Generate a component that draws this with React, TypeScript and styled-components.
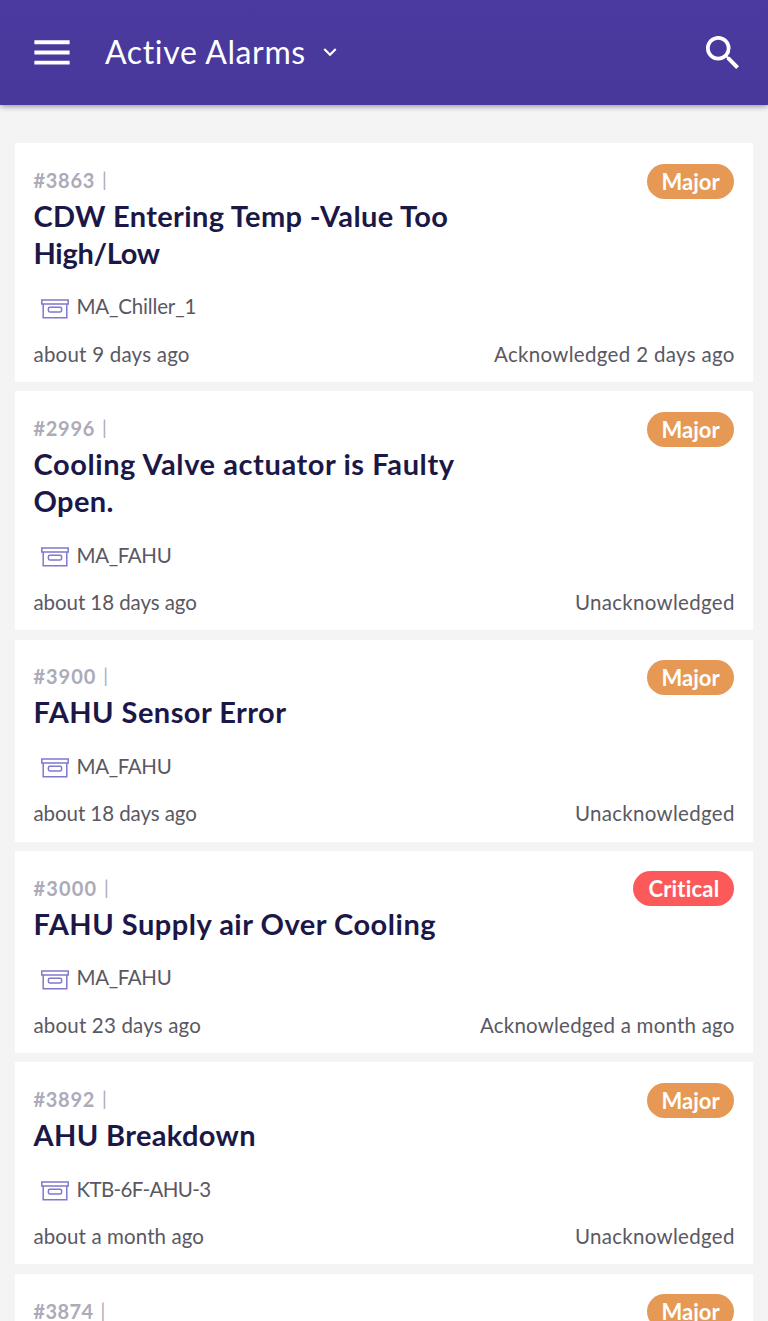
import React from "react";
import styled, { createGlobalStyle } from "styled-components";

type Severity = "Major" | "Critical";

/* A piece of text with its letter spacing in px. */
type Tracked = [text: string, tracking: number];

interface AlarmDetails {
  title: Tracked[];
  asset: Tracked;
  raised: Tracked;
  status: Tracked;
}

interface Alarm {
  id: Tracked;
  severity: Severity;
  details?: AlarmDetails;
}

const UNACKNOWLEDGED: Tracked = ["Unacknowledged", 0.3];
const FAHU: Tracked = ["MA_FAHU", -0.35];

const alarms: Alarm[] = [
  {
    id: ["#3863", 0.7],
    severity: "Major",
    details: {
      title: [["CDW Entering Temp -Value Too", 0.35], ["High/Low", -0.3]],
      asset: ["MA_Chiller_1", -0.17],
      raised: ["about 9 days ago", 0.22],
      status: ["Acknowledged 2 days ago", 0.32],
    },
  },
  {
    id: ["#2996", 0.7],
    severity: "Major",
    details: {
      title: [["Cooling Valve actuator is Faulty", 0.58], ["Open.", 0.4]],
      asset: FAHU,
      raised: ["about 18 days ago", -0.08],
      status: UNACKNOWLEDGED,
    },
  },
  {
    id: ["#3900", 0.95],
    severity: "Major",
    details: {
      title: [["FAHU Sensor Error", 0.46]],
      asset: FAHU,
      raised: ["about 18 days ago", -0.08],
      status: UNACKNOWLEDGED,
    },
  },
  {
    id: ["#3000", 1.12],
    severity: "Critical",
    details: {
      title: [["FAHU Supply air Over Cooling", 0.51]],
      asset: FAHU,
      raised: ["about 23 days ago", 0.17],
      status: ["Acknowledged a month ago", 0.21],
    },
  },
  {
    id: ["#3892", 0.7],
    severity: "Major",
    details: {
      title: [["AHU Breakdown", 0.35]],
      asset: ["KTB-6F-AHU-3", -0.63],
      raised: ["about a month ago", 0.1],
      status: UNACKNOWLEDGED,
    },
  },
  { id: ["#3874", 0.4], severity: "Major" },
];

const GlobalStyle = createGlobalStyle`
  * { box-sizing: border-box; }
  html, body { margin: 0; background: #f4f4f4; }
  body {
    font-family: Lato, "Open Sans", sans-serif;
    font-variant-ligatures: none;
  }
  button { border: 0; padding: 0; background: none; color: inherit; font: inherit; }
  svg { display: block; }
`;

const Screen = styled.div`
  display: flex;
  flex-direction: column;
  height: 1321px;
  overflow: hidden;
`;

const AppBar = styled.header`
  flex: none;
  display: flex;
  align-items: center;
  height: 105px;
  padding: 0 29px 0 34px;
  color: #fff;
  background: linear-gradient(#4b3a9f, #48389b);
  box-shadow: 0 1px 6px rgba(0, 0, 0, 0.45);
`;

const MenuButton = styled.button`
  margin-right: 35px;
`;

const ViewPicker = styled.button`
  display: flex;
  align-items: center;
  flex: 1;
`;

const ViewName = styled.span`
  margin-top: -1px;
  font-size: 32px;
  line-height: 40px;
  letter-spacing: 0.63px;
`;

const Chevron = styled.svg`
  margin: -1px 0 0 11.2px;
`;

const List = styled.main`
  display: flex;
  flex-direction: column;
  gap: 9.3px;
  padding: 38px 15px 0;
`;

const Card = styled.article`
  flex: none;
  padding: 20.6px 18.6px 14.2px 18.5px;
  background: #fff;
  color: #5a5863;
  font-size: 20.5px;
`;

const CardHead = styled.div`
  display: flex;
  justify-content: space-between;
  align-items: flex-start;
`;

const Heading = styled.div`
  padding-top: 4.3px;
`;

const AlarmId = styled.div<{ $tracking: number }>`
  display: flex;
  align-items: center;
  gap: 7px;
  height: 24.2px;
  line-height: 24.2px;
  color: #acabb9;
  font-size: 20px;
  font-weight: 700;
  letter-spacing: ${(p) => p.$tracking}px;
`;

const Divider = styled.span`
  font-size: 19px;
  font-weight: 400;
`;

const Title = styled.h2`
  margin: 5.8px 0 -1px;
  color: #1b1848;
  font-size: 29px;
  font-weight: 700;
  line-height: 36.9px;
`;

const TitleLine = styled.span<{ $tracking: number }>`
  display: block;
  white-space: nowrap;
  letter-spacing: ${(p) => p.$tracking}px;
`;

const Text = styled.span<{ $tracking: number }>`
  white-space: nowrap;
  letter-spacing: ${(p) => p.$tracking}px;
  margin-right: ${(p) => -p.$tracking}px;
`;

const Badge = styled.span<{ $severity: Severity }>`
  display: flex;
  justify-content: center;
  width: ${(p) => (p.$severity === "Critical" ? 101 : 87.5)}px;
  height: 35px;
  border-radius: 18px;
  color: #fff;
  background: ${(p) => (p.$severity === "Critical" ? "#fc5a5a" : "#e69955")};
  font-size: 22px;
  font-weight: 700;
  line-height: 35px;
  letter-spacing: ${(p) => (p.$severity === "Critical" ? 0.2 : 0)}px;
`;

const AssetRow = styled.div`
  display: flex;
  align-items: center;
  gap: 7.5px;
  height: 30px;
  margin-top: 20.8px;
  padding-left: 7.5px;
`;

const AssetIcon = styled.svg`
  margin-top: 4.2px;
`;

const CardFoot = styled.footer`
  display: flex;
  justify-content: space-between;
  margin-top: 18.3px;
  line-height: 28px;
`;

const BoxGlyph = () => (
  <AssetIcon width="28" height="20" viewBox="0 0 28 20" fill="none" stroke="#8078cd" strokeWidth="1.5">
    <path d="M.8.9h26.4v4H.8z" />
    <path d="M2.2 4.9v13.9h23.6V4.9" />
    <rect x="7.4" y="8.3" width="13.2" height="4.6" rx="1.4" />
  </AssetIcon>
);

const AlarmCard = ({ id, severity, details }: Alarm) => (
  <Card>
    <CardHead>
      <Heading>
        <AlarmId $tracking={id[1]}>
          {id[0]}
          <Divider>|</Divider>
        </AlarmId>
        {details && (
          <Title>
            {details.title.map(([text, tracking]) => (
              <TitleLine key={text} $tracking={tracking}>{text}</TitleLine>
            ))}
          </Title>
        )}
      </Heading>
      <Badge $severity={severity}>{severity}</Badge>
    </CardHead>
    {details && (
      <>
        <AssetRow>
          <BoxGlyph />
          <Text $tracking={details.asset[1]}>{details.asset[0]}</Text>
        </AssetRow>
        <CardFoot>
          <Text $tracking={details.raised[1]}>{details.raised[0]}</Text>
          <Text $tracking={details.status[1]}>{details.status[0]}</Text>
        </CardFoot>
      </>
    )}
  </Card>
);

export default function App() {
  return (
    <Screen>
      <GlobalStyle />
      <AppBar>
        <MenuButton aria-label="Menu">
          <svg width="36" height="25" viewBox="0 0 36 25" fill="#fff">
            <path d="M.4.3h35.2v3.9H.4zM.4 10.5h35.2v3.9H.4zM.4 20.7h35.2v3.9H.4z" />
          </svg>
        </MenuButton>
        <ViewPicker>
          <ViewName>Active Alarms</ViewName>
          <Chevron width="26" height="26" viewBox="0 0 24 24" fill="#fff">
            <path d="M16.59 8.59 12 13.17 7.41 8.59 6 10l6 6 6-6z" />
          </Chevron>
        </ViewPicker>
        <button aria-label="Search">
          <svg width="33" height="33" viewBox="3 3 17.5 17.5" fill="#fff">
            <path d="M15.5 14h-.79l-.28-.27A6.471 6.471 0 0 0 16 9.5 6.5 6.5 0 1 0 9.5 16c1.61 0 3.09-.59 4.23-1.57l.27.28v.79l5 4.99L20.49 19l-4.99-5zm-6 0C7.01 14 5 11.99 5 9.5S7.01 5 9.5 5 14 7.01 14 9.5 11.99 14 9.5 14z" />
          </svg>
        </button>
      </AppBar>
      <List>
        {alarms.map((alarm) => (
          <AlarmCard key={alarm.id[0]} {...alarm} />
        ))}
      </List>
    </Screen>
  );
}
